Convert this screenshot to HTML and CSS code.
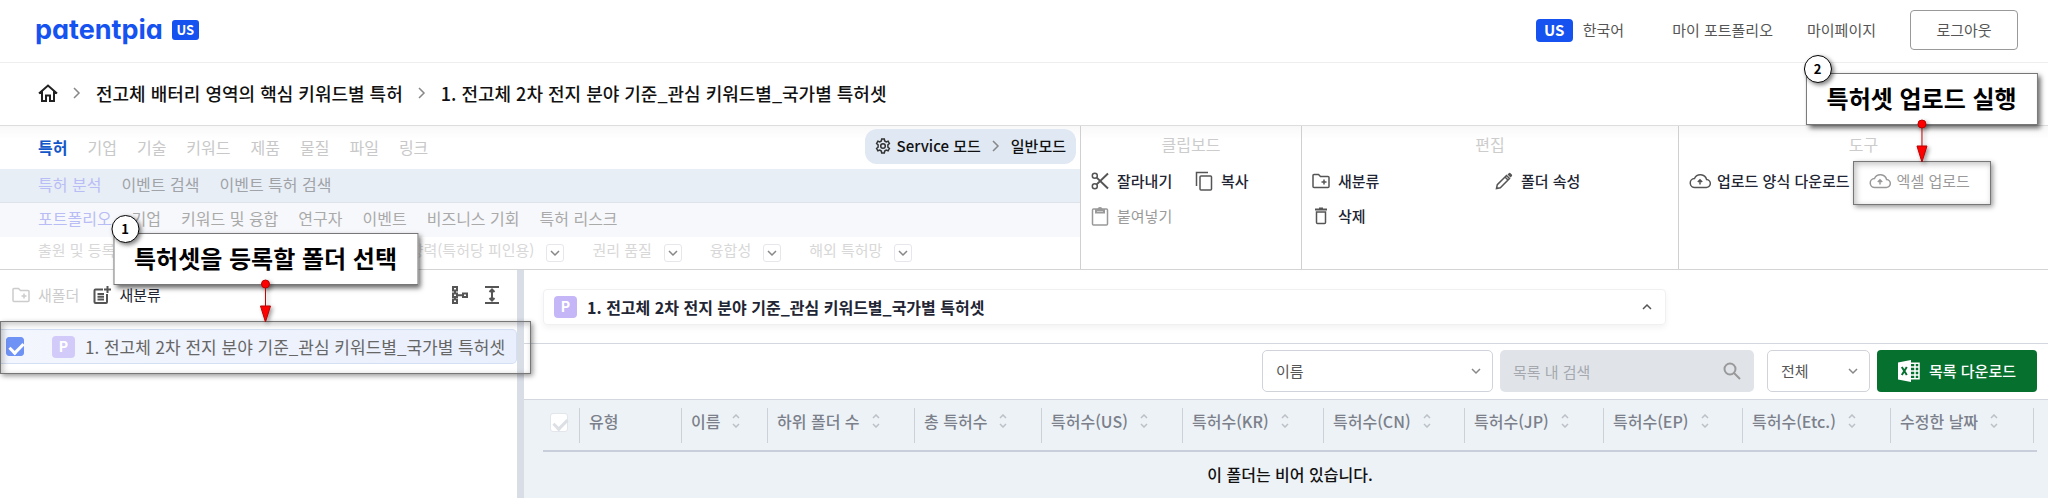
FILE: index.html
```html
<!DOCTYPE html>
<html lang="ko">
<head>
    <meta charset="UTF-8">
    <meta name="viewport" content="width=device-width, initial-scale=1.0">
    <title>patentpia</title>
    <link rel="stylesheet" href="styles.css">
</head>
<body>
    <!-- icons shared by several buttons -->
    <svg class="sprite" aria-hidden="true">
        <symbol id="i-right" viewBox="0 0 10 14"><path d="M2 2l5 5-5 5"/></symbol>
        <symbol id="i-down" viewBox="0 0 12 8"><path d="M2 2l4 4 4-4"/></symbol>
        <symbol id="i-sort" viewBox="0 0 8 14"><path d="M1 4l3-3 3 3M1 10l3 3 3-3"/></symbol>
        <symbol id="i-folder" viewBox="0 0 18 18"><path d="M1 3.500a1 1 0 0 1 1-1h4.500l2 2H16a1 1 0 0 1 1 1v9a1 1 0 0 1-1 1H2a1 1 0 0 1-1-1zM12 7.500v5M9.500 10h5"/></symbol>
        <symbol id="i-cloud" viewBox="0 0 22 16"><path d="M6 14.500h11a4 4 0 0 0 .6-8A6.500 6.500 0 0 0 5.500 5.500 4.500 4.500 0 0 0 6 14.500zM11 11.500V7M8.800 9L11 6.800 13.200 9"/></symbol>
    </svg>

    <header class="header">
        <a href="#" class="logo">patentpia<span class="logo-tag">US</span></a>
        <nav class="header-menu">
            <a href="#" class="lang"><span class="lang-tag">US</span>한국어</a>
            <a href="#">마이 포트폴리오</a>
            <a href="#">마이페이지</a>
            <button class="logout">로그아웃</button>
        </nav>
    </header>

    <nav class="breadcrumb">
        <a href="#" aria-label="홈"><svg class="home" viewBox="0 0 20 18"><path d="M1 9.500L10 1.500l9 8M4 7.500V17h4v-5.500h4V17h4V7.500"/></svg></a>
        <svg class="chev"><use href="#i-right"/></svg>
        <a href="#">전고체 배터리 영역의 핵심 키워드별 특허</a>
        <svg class="chev"><use href="#i-right"/></svg>
        <a href="#">1. 전고체 2차 전지 분야 기준_관심 키워드별_국가별 특허셋</a>
    </nav>

    <section class="ribbon">
        <div class="menus">
            <div class="menu menu-main">
                <a href="#" class="active">특허</a>
                <a href="#">기업</a>
                <a href="#">기술</a>
                <a href="#">키워드</a>
                <a href="#">제품</a>
                <a href="#">물질</a>
                <a href="#">파일</a>
                <a href="#">링크</a>
                <button class="mode">
                    <svg class="gear" viewBox="0 0 16 16"><path d="M6.700 1h2.600l.4 2 1.500.9 1.900-.7 1.300 2.300-1.500 1.300v2.400l1.500 1.300-1.300 2.300-1.900-.7-1.500.9-.4 2H6.700l-.4-2-1.500-.9-1.900.7-1.300-2.300 1.500-1.300V6.800L1.600 5.500l1.300-2.300 1.900.7L6.300 3z"/><circle cx="8" cy="8" r="2.300"/></svg>
                    <span>Service 모드</span>
                    <svg class="chev"><use href="#i-right"/></svg>
                    <span>일반모드</span>
                </button>
            </div>
            <div class="menu menu-sub">
                <a href="#" class="active">특허 분석</a>
                <a href="#">이벤트 검색</a>
                <a href="#">이벤트 특허 검색</a>
            </div>
            <div class="menu menu-third">
                <a href="#" class="active">포트폴리오</a>
                <a href="#">기업</a>
                <a href="#">키워드 및 융합</a>
                <a href="#">연구자</a>
                <a href="#">이벤트</a>
                <a href="#">비즈니스 기회</a>
                <a href="#">특허 리스크</a>
            </div>
            <div class="menu menu-filter">
                <span>출원 및 등록</span><button aria-label="출원 및 등록"><svg><use href="#i-down"/></svg></button>
                <span class="wide">영향력(특허당 피인용)</span><button aria-label="영향력"><svg><use href="#i-down"/></svg></button>
                <span>권리 품질</span><button aria-label="권리 품질"><svg><use href="#i-down"/></svg></button>
                <span>융합성</span><button aria-label="융합성"><svg><use href="#i-down"/></svg></button>
                <span>해외 특허망</span><button aria-label="해외 특허망"><svg><use href="#i-down"/></svg></button>
            </div>
        </div>

        <div class="group group-clip">
            <h2>클립보드</h2>
            <div class="tools">
                <button><svg viewBox="0 0 18 18"><circle cx="3.800" cy="3.800" r="2.500"/><circle cx="3.800" cy="14.200" r="2.500"/><path class="bold" d="M5.700 5.600L17 16.500M5.700 12.400L17 1.500"/></svg>잘라내기</button>
                <button><svg viewBox="0 0 18 20"><path d="M1.500 15V1.500H13"/><rect x="5" y="5" width="11.500" height="14" rx="1"/></svg>복사</button>
                <button class="off"><svg viewBox="0 0 18 20"><rect x="1.500" y="3" width="15" height="16" rx="1"/><path class="bold" d="M5 4h8v2.500H5zM7.500 3.500a1.500 1.500 0 0 1 3 0"/></svg>붙여넣기</button>
            </div>
        </div>

        <div class="group group-edit">
            <h2>편집</h2>
            <div class="tools">
                <button><svg viewBox="0 0 18 18"><use href="#i-folder"/></svg>새분류</button>
                <button><svg viewBox="0 0 18 18"><path d="M1.500 16.500l.8-3.800L11.500 3.500l3 3-9.200 9.200zM10 5l3 3"/><path class="fill" d="M12.500 2.500l1.300-1.300a1.200 1.200 0 0 1 1.700 0l1.300 1.300a1.200 1.200 0 0 1 0 1.700l-1.300 1.300z"/></svg>폴더 속성</button>
                <button><svg viewBox="0 0 18 18"><path d="M4.500 5h9v10.500a1 1 0 0 1-1 1h-7a1 1 0 0 1-1-1z"/><path class="bold" d="M3 2.500h12M7 1.500h4"/></svg>삭제</button>
            </div>
        </div>

        <div class="group group-tool">
            <h2>도구</h2>
            <div class="tools">
                <button><svg class="cloud"><use href="#i-cloud"/></svg>업로드 양식 다운로드</button>
                <div class="target">
                    <button class="off"><svg class="cloud"><use href="#i-cloud"/></svg>엑셀 업로드</button>
                    <div class="frame">
                        <div class="callout">
                            <span class="num">2</span>특허셋 업로드 실행
                            <svg class="arrow" viewBox="0 0 14 44"><path d="M7 5v22"/><circle cx="7" cy="5" r="4"/><path d="M2 27h10L7 43z"/></svg>
                        </div>
                    </div>
                </div>
            </div>
        </div>
    </section>

    <main class="main">
        <aside class="side">
            <div class="side-bar">
                <button class="off"><svg viewBox="0 0 18 18"><use href="#i-folder"/></svg>새폴더</button>
                <button><svg viewBox="0 0 18 18"><path class="bold" d="M10 3.500H2.500a1 1 0 0 0-1 1V16a1 1 0 0 0 1 1H13a1 1 0 0 0 1-1V8M4.500 8h6.500M4.500 10.800h6.500M4.500 13.600h6.500M14.500 0v7M11 3.500h7"/></svg>새분류</button>
                <button class="tree" aria-label="트리 보기"><svg viewBox="0 0 18 18"><path class="bold" d="M2 1h4v3.500H2zM2 7.500h4v3.500H2zM2 13.500h4V17H2zM12 7.500h4v3.500h-4zM4 4.500v3M4 11v2.500M6 9.200h6"/></svg></button>
                <button aria-label="펼치기"><svg viewBox="0 0 18 18"><path class="bold" d="M2 1h14M2 17h14M9 4v10M6.500 6L9 3.500 11.500 6M6.500 12L9 14.500l2.500-2.500"/></svg></button>
            </div>
            <div class="row-wrap">
                <label class="row">
                    <input type="checkbox" class="check" checked>
                    <span class="badge">P</span>
                    <span>1. 전고체 2차 전지 분야 기준_관심 키워드별_국가별 특허셋</span>
                </label>
                <div class="frame">
                    <div class="callout">
                        <span class="num">1</span>특허셋을 등록할 폴더 선택
                        <svg class="arrow" viewBox="0 0 14 44"><path d="M7 5v22"/><circle cx="7" cy="5" r="4"/><path d="M2 27h10L7 43z"/></svg>
                    </div>
                </div>
            </div>
        </aside>

        <section class="content">
            <div class="head">
                <div class="card">
                    <span class="badge">P</span>
                    <h1>1. 전고체 2차 전지 분야 기준_관심 키워드별_국가별 특허셋</h1>
                    <button aria-label="접기"><svg viewBox="0 0 12 8"><path d="M2 6l4-4 4 4"/></svg></button>
                </div>
            </div>

            <div class="filter">
                <div class="select select-name">
                    <select aria-label="검색 항목"><option>이름</option></select>
                    <svg><use href="#i-down"/></svg>
                </div>
                <div class="search">
                    <input type="text" placeholder="목록 내 검색" aria-label="목록 내 검색" disabled>
                    <svg viewBox="0 0 18 18"><circle cx="7" cy="7" r="5.500"/><path d="M11 11l6 6"/></svg>
                </div>
                <div class="select select-all">
                    <select aria-label="범위"><option>전체</option></select>
                    <svg><use href="#i-down"/></svg>
                </div>
                <button class="excel">
                    <svg viewBox="0 0 22 22"><path class="fill" d="M0 2.500L13 0v22L0 19.500z"/><path d="M13 3.200h8v15.600h-8M13 7h8M13 11h8M13 15h8M17 3v16"/><path class="x" d="M3.800 7l5 8M8.800 7l-5 8"/></svg>
                    목록 다운로드
                </button>
            </div>

            <div class="list">
                <table>
                    <thead>
                        <tr>
                            <th><input type="checkbox" class="check" aria-label="전체 선택" disabled></th>
                            <th><div>유형</div></th>
                            <th><div>이름<svg><use href="#i-sort"/></svg></div></th>
                            <th><div>하위 폴더 수<svg><use href="#i-sort"/></svg></div></th>
                            <th><div>총 특허수<svg><use href="#i-sort"/></svg></div></th>
                            <th><div>특허수(US)<svg><use href="#i-sort"/></svg></div></th>
                            <th><div>특허수(KR)<svg><use href="#i-sort"/></svg></div></th>
                            <th><div>특허수(CN)<svg><use href="#i-sort"/></svg></div></th>
                            <th><div>특허수(JP)<svg><use href="#i-sort"/></svg></div></th>
                            <th><div>특허수(EP)<svg><use href="#i-sort"/></svg></div></th>
                            <th><div>특허수(Etc.)<svg><use href="#i-sort"/></svg></div></th>
                            <th><div>수정한 날짜<svg><use href="#i-sort"/></svg></div></th>
                        </tr>
                    </thead>
                    <tbody>
                        <tr><td colspan="12">이 폴더는 비어 있습니다.</td></tr>
                    </tbody>
                </table>
            </div>
        </section>
    </main>
</body>
</html>
```
FILE: styles.css
```css
* {
    margin: 0;
    padding: 0;
    box-sizing: border-box;
}

body {
    font-family: "Noto Sans CJK KR", sans-serif;
    font-size: 15px;
    line-height: 22px;
    color: #222;
    background: #fff;
    min-height: 100vh;
    display: flex;
    flex-direction: column;
}

a {
    color: inherit;
    text-decoration: none;
}

button,
input,
select {
    font: inherit;
    color: inherit;
    border: none;
    background: none;
}

button {
    display: flex;
    align-items: center;
    white-space: nowrap;
    cursor: pointer;
}

svg {
    fill: none;
    stroke: #555;
    stroke-width: 1.5;
    flex: none;
}

svg .bold {
    stroke-width: 2;
}

svg .fill {
    fill: #555;
    stroke: none;
}

.sprite {
    position: absolute;
    width: 0;
    height: 0;
}

.chev {
    width: 10px;
    height: 14px;
    stroke: #888;
}

/* header */
.header {
    display: flex;
    justify-content: space-between;
    align-items: center;
    height: 63px;
    padding: 0 30px 2px 35px;
    border-bottom: 1px solid #eee;
}

.logo {
    display: flex;
    align-items: center;
    gap: 9px;
    font-family: Inter, sans-serif;
    font-feature-settings: "cv11";
    font-size: 27px;
    font-weight: 700;
    color: #1652f0;
}

.logo-tag,
.lang-tag {
    display: flex;
    align-items: center;
    justify-content: center;
    background: #1652f0;
    color: #fff;
    font-weight: 700;
    border-radius: 3px;
}

.logo-tag {
    width: 27px;
    height: 20px;
    font-family: "Noto Sans CJK KR", sans-serif;
    font-size: 13px;
}

.lang-tag {
    width: 37px;
    height: 23px;
    border-radius: 4px;
}

.header-menu {
    display: flex;
    align-items: center;
    gap: 34px;
    color: #555;
}

.lang {
    display: flex;
    align-items: center;
    gap: 10px;
    margin-right: 14px;
}

.logout {
    justify-content: center;
    width: 108px;
    height: 40px;
    border: 1px solid #999;
    border-radius: 4px;
}

/* breadcrumb */
.breadcrumb {
    display: flex;
    align-items: center;
    gap: 14px;
    height: 63px;
    padding: 0 0 2px 38px;
    font-size: 18px;
    font-weight: 500;
    color: #111;
    border-bottom: 1px solid #ddd;
}

.home {
    display: block;
    width: 20px;
    height: 18px;
    stroke: #222;
    stroke-width: 2;
}

/* ribbon */
.ribbon {
    display: grid;
    grid-template-columns: 1080fr 221fr 377fr 370fr;
    background: linear-gradient(#f8f8f8, #fff 14px);
    border-bottom: 1px solid #d4d4d4;
}

.menu {
    display: flex;
    align-items: center;
    gap: 20px;
    height: 34px;
    padding: 0 0 4px 38px;
    font-size: 16px;
    color: #aaa;
    white-space: nowrap;
}

.menu-main {
    height: 43px;
    padding: 0 4px 2px 38px;
    color: #c8c8c8;
}

.menu-main .active {
    color: #1257c9;
    font-weight: 700;
}

.menu-sub {
    background: #e8eef5;
    border-bottom: 1px solid #dde3e9;
    color: #a0a3a8;
}

.menu-third {
    background: #f7f8fb;
}

.menu-sub .active,
.menu-third .active {
    color: #b9bdf5;
}

.mode {
    gap: 6px;
    height: 35px;
    margin-left: auto;
    padding: 0 10px 2px;
    font-size: 15px;
    font-weight: 500;
    color: #111;
    background: #dfe8f3;
    border-radius: 12px;
}

.mode .gear {
    width: 16px;
    height: 16px;
    stroke: #333;
}

.mode .chev {
    margin: 0 4px;
}

.menu-filter {
    height: 32px;
    gap: 0;
    padding-bottom: 6px;
    font-size: 15px;
    color: #d8d8d8;
}

.menu-filter .wide {
    width: 361px;
    text-align: right;
}

.menu-filter button {
    justify-content: center;
    width: 18px;
    height: 18px;
    margin: 6px 28px 0 12px;
    border: 1px solid #e6e6ec;
    border-radius: 3px;
}

.menu-filter svg,
.select svg {
    width: 12px;
    height: 8px;
    stroke: #888;
}

.group {
    border-left: 1px solid #d0d0d0;
    color: #222533;
    font-weight: 500;
}

.group h2 {
    font-size: 16px;
    font-weight: 400;
    line-height: 37px;
    text-align: center;
    color: #ccc;
}

.tools {
    display: grid;
    grid-auto-rows: 35px;
    justify-content: start;
    padding-left: 10px;
}

.group-clip .tools {
    grid-template-columns: 104px auto;
}

.group-edit .tools {
    grid-template-columns: 183px auto;
}

.group-tool .tools {
    grid-template-columns: auto 138px;
    column-gap: 3px;
}

.group button,
.side-bar button {
    gap: 8px;
}

.group svg,
.side-bar svg {
    width: 18px;
    height: 20px;
}

.group-tool button {
    gap: 6px;
}

.group .cloud {
    width: 22px;
    height: 16px;
}

.off {
    color: #9a9a9a;
    font-weight: 400;
}

.off svg {
    stroke: #999;
}

.target {
    position: relative;
    display: flex;
    padding-left: 16px;
}

/* guide marks over the page */
.frame {
    position: absolute;
    inset: -2px 0 -7px;
    border: 1px solid #777;
    box-shadow: 2px 2px 5px rgba(0, 0, 0, 0.4), inset 2px 2px 6px rgba(0, 0, 0, 0.25);
    pointer-events: none;
}

.callout {
    position: absolute;
    left: 50%;
    bottom: calc(100% + 37px);
    transform: translateX(-50%);
    padding: 0 20px 2px;
    font-size: 24px;
    font-weight: 700;
    line-height: 48px;
    color: #000;
    white-space: nowrap;
    background: #fff;
    border: 1px solid #777;
    box-shadow: 3px 3px 5px rgba(0, 0, 0, 0.6);
}

.num {
    position: absolute;
    left: -3px;
    top: -19px;
    width: 28px;
    height: 28px;
    font-size: 13px;
    line-height: 25px;
    text-align: center;
    background: #fff;
    border: 1px solid #000;
    border-radius: 50%;
    box-shadow: 2px 2px 4px rgba(0, 0, 0, 0.5);
}

.callout .arrow {
    position: absolute;
    left: calc(50% - 7px);
    top: 45px;
    width: 14px;
    height: 44px;
    fill: #f00;
    stroke: #b00;
    stroke-width: 1;
    filter: drop-shadow(2px 2px 2px rgba(0, 0, 0, 0.4));
}

/* folder tree */
.main {
    display: flex;
    flex: 1;
}

.side {
    flex: none;
    width: 524px;
    border-right: 7px solid #d9dde6;
}

.side-bar {
    display: flex;
    align-items: center;
    gap: 14px;
    height: 50px;
    padding: 0 16px 0 12px;
    color: #222533;
}

.side-bar .off {
    color: #ccc;
}

.side-bar .off svg {
    stroke: #ccc;
}

.side-bar .tree {
    margin-left: auto;
}

.row-wrap {
    position: relative;
    margin-top: 9px;
}

.row-wrap .frame {
    inset: -8px -14px -10px 0;
}

.row {
    display: flex;
    align-items: center;
    height: 35px;
    padding-left: 6px;
    font-size: 17px;
    color: #666;
    white-space: nowrap;
    background: linear-gradient(90deg, #f3f6fd, #e9effc);
    border: 1px solid #d3dff5;
    border-left: none;
    border-radius: 0 5px 5px 0;
}

.check {
    appearance: none;
    display: block;
    position: relative;
    width: 18px;
    height: 19px;
    background: #fff;
    border: 1px solid #e2e5ea;
    border-radius: 3px;
}

.check::after {
    content: "";
    position: absolute;
    left: 5px;
    top: 2px;
    width: 6px;
    height: 11px;
    border: solid #dcdfe4;
    border-width: 0 3px 3px 0;
    transform: rotate(45deg);
}

.check:checked {
    background: #6f92f5;
    border-color: #6f92f5;
}

.check:checked::after {
    border-color: #fff;
}

.badge {
    width: 23px;
    height: 22px;
    margin-right: 10px;
    font-family: Inter, sans-serif;
    font-size: 14px;
    font-weight: 700;
    line-height: 22px;
    text-align: center;
    color: #fff;
    background: #c5b6f8;
    border-radius: 4px;
}

.row .badge {
    margin-left: 28px;
    background: #d2caf9;
}

/* folder content */
.content {
    flex: 1;
    min-width: 0;
    display: flex;
    flex-direction: column;
}

.head {
    height: 74px;
    padding: 19px 382px 0 19px;
    border-bottom: 1px solid #d4d8de;
}

.card {
    display: flex;
    align-items: center;
    height: 36px;
    padding: 0 12px 1px 10px;
    border: 1px solid #f0f0f3;
    border-radius: 4px;
    box-shadow: 0 3px 6px rgba(0, 0, 0, 0.05);
}

.card h1 {
    font-size: 16px;
    font-weight: 700;
    color: #222533;
}

.card button {
    margin-left: auto;
}

.card svg {
    width: 12px;
    height: 8px;
}

.filter {
    display: flex;
    justify-content: flex-end;
    gap: 7px;
    padding: 6px 11px 7px 0;
    border-bottom: 1px solid #d4d8de;
}

.select,
.search {
    display: grid;
    align-items: center;
    height: 42px;
    border-radius: 5px;
}

.select {
    border: 1px solid #d0d4da;
    color: #555;
}

.select-name {
    width: 231px;
}

.select-all {
    width: 103px;
    margin-left: 6px;
}

.select select,
.search input {
    grid-area: 1 / 1;
    width: 100%;
    height: 40px;
    padding-left: 13px;
    appearance: none;
}

.select svg,
.search svg {
    grid-area: 1 / 1;
    justify-self: end;
    margin-right: 10px;
    pointer-events: none;
}

.search {
    width: 254px;
    background: #e0e4e9;
}

.search input::placeholder {
    color: #a5a9af;
}

.search svg {
    width: 18px;
    height: 18px;
    margin-right: 13px;
    stroke: #999;
    stroke-width: 2;
}

.excel {
    justify-content: center;
    gap: 9px;
    width: 160px;
    height: 42px;
    color: #fff;
    font-weight: 500;
    background: #06702f;
    border-radius: 4px;
}

.excel svg {
    width: 22px;
    height: 22px;
    stroke: #fff;
}

.excel .fill {
    fill: #fff;
}

.excel .x {
    stroke: #06702f;
    stroke-width: 2;
}

.list {
    flex: 1;
    padding: 0 11px 0 19px;
    background: #edf2f6;
}

table {
    width: 100%;
    table-layout: fixed;
    border-collapse: collapse;
    font-size: 16px;
}

th {
    width: 141px;
    height: 51px;
    padding: 0;
    border-bottom: 2px solid #c9cfda;
    font-weight: 500;
    text-align: left;
    white-space: nowrap;
    color: #7b808b;
}

th div {
    display: flex;
    align-items: center;
    gap: 12px;
    height: 35px;
    padding: 0 0 8px 9px;
    border-left: 1px solid #ccd1d8;
}

th:nth-child(1) {
    width: 36px;
    padding: 0 0 6px 7px;
}

th:nth-child(2) {
    width: 102px;
}

th:nth-child(3) {
    width: 86px;
}

th:nth-child(4) {
    width: 147px;
}

th:nth-child(5) {
    width: 127px;
}

th:nth-child(9),
th:nth-child(10) {
    width: 139px;
}

th:nth-child(11) {
    width: 148px;
}

th:nth-child(12) {
    width: 147px;
}

th:last-child div {
    margin-right: 3px;
    border-right: 1px solid #ccd1d8;
}

th svg {
    width: 8px;
    height: 14px;
    stroke: #bcc0c7;
}

td {
    height: 48px;
    padding-bottom: 3px;
    text-align: center;
    font-weight: 500;
    color: #111;
}
```
